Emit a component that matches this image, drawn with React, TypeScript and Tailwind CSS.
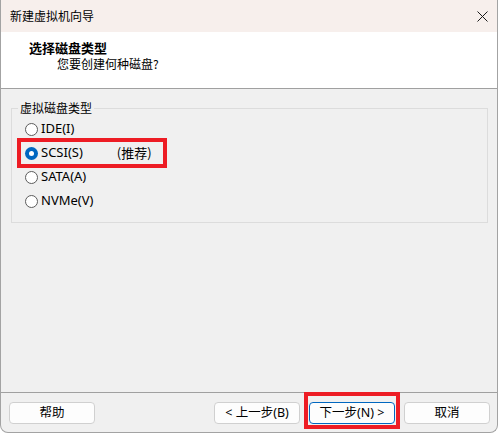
import React from "react";

const FONT = { fontFamily: '"Noto Sans", "Noto Sans CJK SC", sans-serif' };
const CJK = { fontFamily: '"Noto Sans CJK SC", "Noto Sans", sans-serif' };

function Radio({ checked }: { checked?: boolean }) {
  return checked ? (
    <span className="flex h-[13px] w-[13px] items-center justify-center rounded-full bg-[#0067c0]">
      <span className="h-[5px] w-[5px] rounded-full bg-white" />
    </span>
  ) : (
    <span className="h-[13px] w-[13px] rounded-full border border-[#5c5c5c] bg-white" />
  );
}

function Option({
  label,
  checked,
  extra,
  marked,
}: {
  label: string;
  checked?: boolean;
  extra?: string;
  marked?: boolean;
}) {
  return (
    <div className="relative flex h-[24px] items-center pl-[13px]">
      <Radio checked={checked} />
      <span className="ml-[3px] text-[13px] text-black" style={FONT}>
        {label}
      </span>
      {extra && (
        <span className="ml-[34px] text-[13px] text-black" style={CJK}>
          {extra}
        </span>
      )}
      {marked && (
        <span className="pointer-events-none absolute left-[5px] top-[-3px] h-[30px] w-[150px] border-4 border-[#ed1c24]" />
      )}
    </div>
  );
}

function Btn({ children, primary }: { children: React.ReactNode; primary?: boolean }) {
  return (
    <button
      className={
        "flex h-[22px] w-[86px] items-center justify-center rounded-[4px] border bg-[#fdfdfd] text-[12.5px] text-black " +
        (primary ? "border-[#0067c0]" : "border-[#d0d0d0]")
      }
      style={FONT}
    >
      {children}
    </button>
  );
}

export default function App() {
  return (
    <div className="h-[436px] w-[499px] bg-white">
      <div className="flex h-[433px] w-[498px] flex-col overflow-hidden rounded-b-[8px] border-x border-b border-[#a3a3a3] bg-[#f0f0f0]">
        {/* title bar */}
        <div className="flex h-[32px] items-center justify-between bg-[#f7efec] pl-[9px] pr-[8px]">
          <span className="text-[12px] text-black" style={CJK}>
            新建虚拟机向导
          </span>
          <svg width="11" height="11" viewBox="0 0 11 11" className="mr-[1px]">
            <path d="M0.5 0.5 L10.5 10.5 M10.5 0.5 L0.5 10.5" stroke="#1a1a1a" strokeWidth="1" />
          </svg>
        </div>

        {/* header */}
        <div className="h-[57px] border-b border-[#a0a0a0] bg-white pt-[8px]">
          <div className="pl-[28px] text-[13px] font-bold leading-[16px] text-black" style={CJK}>
            选择磁盘类型
          </div>
          <div className="pl-[56px] text-[12px] leading-[16px] text-black" style={CJK}>
            您要创建何种磁盘?
          </div>
        </div>

        {/* body */}
        <div className="flex-1 px-[10px] pt-[11px]">
          <fieldset className="h-[123px] w-[477px] border border-[#dcdcdc] pb-[9px]">
            <legend className="ml-[6px] px-[2px] text-[12px] leading-[16px] text-black" style={CJK}>
              虚拟磁盘类型
            </legend>
            <div className="flex flex-col pt-[1px]">
              <Option label="IDE(I)" />
              <Option label="SCSI(S)" checked extra="(推荐)" marked />
              <Option label="SATA(A)" />
              <Option label="NVMe(V)" />
            </div>
          </fieldset>
        </div>

        {/* footer */}
        <div className="flex h-[40px] items-start border-t border-[#a0a0a0] pl-[8px] pr-[7px] pt-[9px]">
          <Btn>帮助</Btn>
          <div className="ml-auto flex gap-[9px]">
            <Btn>&lt; 上一步(B)</Btn>
            <span className="relative">
              <Btn primary>下一步(N) &gt;</Btn>
              <span className="pointer-events-none absolute left-[-5px] top-[-10px] h-[37px] w-[96px] border-4 border-[#ed1c24]" />
            </span>
            <Btn>取消</Btn>
          </div>
        </div>
      </div>
    </div>
  );
}
